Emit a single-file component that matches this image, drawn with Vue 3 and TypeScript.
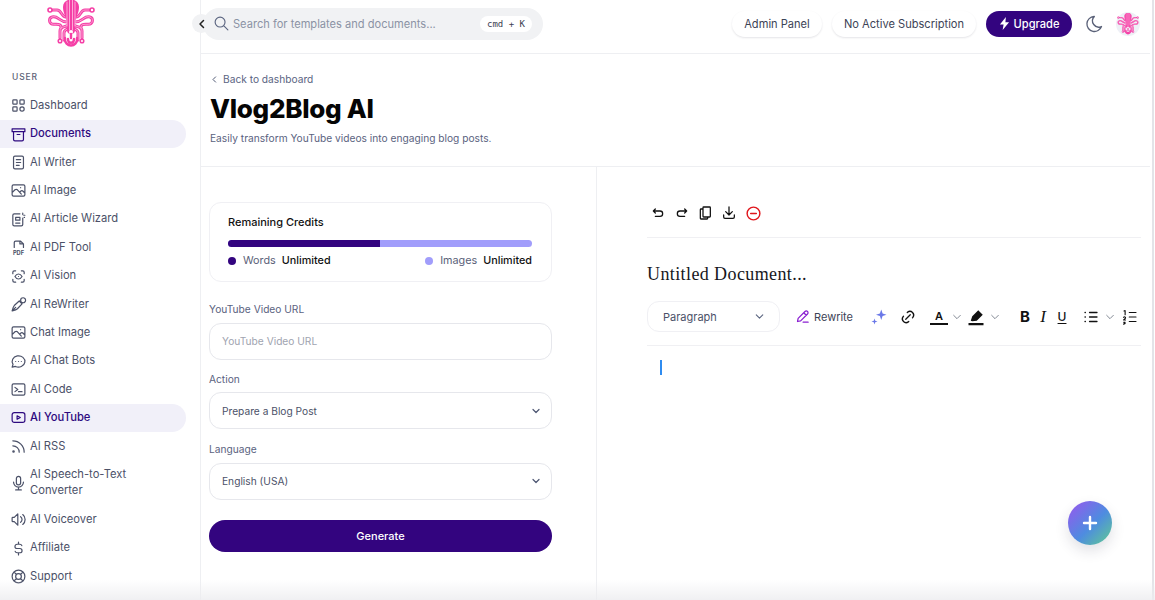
<script setup lang="ts">
interface NavItem {
  label: string
  d: string
  active?: boolean
  tall?: boolean
  pdf?: boolean
}
const photo = 'M5 4h14a2 2 0 0 1 2 2v12a2 2 0 0 1-2 2H5a2 2 0 0 1-2-2V6a2 2 0 0 1 2-2zM3 15l4-4c1.2-1 2.4-1 3.5 0L16 17M14 14l1-1c1.2-1 2.4-1 3.5 0l2.5 2.5M15 8h.01'
const nav: NavItem[] = [
  { label: 'Dashboard', d: 'M5 4h4a1 1 0 0 1 1 1v4a1 1 0 0 1-1 1H5a1 1 0 0 1-1-1V5a1 1 0 0 1 1-1zM15 4h4a1 1 0 0 1 1 1v4a1 1 0 0 1-1 1h-4a1 1 0 0 1-1-1V5a1 1 0 0 1 1-1zM5 14h4a1 1 0 0 1 1 1v4a1 1 0 0 1-1 1H5a1 1 0 0 1-1-1v-4a1 1 0 0 1 1-1zM14 17a3 3 0 1 0 6 0a3 3 0 1 0-6 0' },
  { label: 'Documents', active: true, d: 'M3 4h18v4H3zM5 8v11a2 2 0 0 0 2 2h10a2 2 0 0 0 2-2V8M10 12h4' },
  { label: 'AI Writer', d: 'M7 3h10a2 2 0 0 1 2 2v14a2 2 0 0 1-2 2H7a2 2 0 0 1-2-2V5a2 2 0 0 1 2-2zM9 8h6M9 12h6M9 16h4' },
  { label: 'AI Image', d: photo },
  { label: 'AI Article Wizard', d: 'M14 4H6a2 2 0 0 0-2 2v13a2 2 0 0 0 2 2h10a2 2 0 0 0 2-2V10M8 9h6v4H8zM8 17h6M18 3v2M21 6h-1.5M20 9h.5' },
  { label: 'AI PDF Tool', pdf: true, d: 'M6 12V5a2 2 0 0 1 2-2h7l4 4v5M14 3v4h5' },
  { label: 'AI Vision', d: 'M4 8V6a2 2 0 0 1 2-2h2M4 16v2a2 2 0 0 0 2 2h2M16 4h2a2 2 0 0 1 2 2v2M16 20h2a2 2 0 0 0 2-2v-2M7 12s2-3.5 5-3.5 5 3.5 5 3.5-2 3.5-5 3.5-5-3.5-5-3.5zM12 12h.01' },
  { label: 'AI ReWriter', d: 'M3 21c1-4 1.500-6 3-7.500L13 7l4 4-6.500 7c-1.500 1.500-3.500 2-7.500 3zM3 21l5-5M13 7l4 4M15 6a3.500 3.500 0 1 0 7 0a3.500 3.500 0 1 0-7 0' },
  { label: 'Chat Image', d: photo },
  { label: 'AI Chat Bots', d: 'M3 20l1.300-3.900A9 8 0 1 1 7.700 19L3 20M8 12h.01M12 12h.01M16 12h.01' },
  { label: 'AI Code', d: 'M5 4h14a2 2 0 0 1 2 2v12a2 2 0 0 1-2 2H5a2 2 0 0 1-2-2V6a2 2 0 0 1 2-2zM7 9l4 3-4 3M12 15h5' },
  { label: 'AI YouTube', active: true, d: 'M6 5h12a3 3 0 0 1 3 3v8a3 3 0 0 1-3 3H6a3 3 0 0 1-3-3V8a3 3 0 0 1 3-3zM10 9.500l4.500 2.500-4.500 2.500z' },
  { label: 'AI RSS', d: 'M4 19a1 1 0 1 0 2 0a1 1 0 1 0-2 0M4 4a16 16 0 0 1 16 16M4 11a9 9 0 0 1 9 9' },
  { label: 'AI Speech-to-Text Converter', tall: true, d: 'M12 2a3 3 0 0 1 3 3v6a3 3 0 0 1-6 0V5a3 3 0 0 1 3-3zM5 10a7 7 0 0 0 14 0M8 21h8M12 17v4' },
  { label: 'AI Voiceover', d: 'M15 8a5 5 0 0 1 0 8M18 5a9 9 0 0 1 0 14M6 15H4a1 1 0 0 1-1-1v-4a1 1 0 0 1 1-1h2l5-5v16z' },
  { label: 'Affiliate', d: 'M16.700 8A3 3 0 0 0 14 6h-4a3 3 0 0 0 0 6h4a3 3 0 0 1 0 6h-4a3 3 0 0 1-2.700-2M12 3v3M12 18v3' },
  { label: 'Support', d: 'M8 12a4 4 0 1 0 8 0a4 4 0 1 0-8 0M3 12a9 9 0 1 0 18 0a9 9 0 1 0-18 0M15 15l3.350 3.350M9 15l-3.350 3.350M5.650 5.650L9 9M18.350 5.650L15 9' }
]
const octoLines = 'M19 17c-5 0-4-7-9-7H6M20 22c-8 0-9-7-15-5-3.500 1-3 6 0 7 4 1 9-1 9 3v2M21 25c-4 3-8 1-8 6v7M22 28c-3 2-5 2-5 5v7'
const tools = [
  'M8 12L5 9l3-3M5 9h10a3.500 3.500 0 0 1 0 8H8',
  'M16 12l3-3-3-3M19 9H9a3.500 3.500 0 0 0 0 8h7',
  'M10 3h9a1 1 0 0 1 1 1v13a1 1 0 0 1-1 1h-9a1 1 0 0 1-1-1V4a1 1 0 0 1 1-1zM9 6H6a1 1 0 0 0-1 1v13a1 1 0 0 0 1 1h9a1 1 0 0 0 1-1v-2',
  'M4 15v3a2 2 0 0 0 2 2h12a2 2 0 0 0 2-2v-3M7 10l5 5 5-5M12 3v12'
]
</script>

<template>
  <div class="page">
    <svg class="defs" width="0" height="0" aria-hidden="true">
      <symbol id="octo" viewBox="0 0 48 48">
        <g fill="none" stroke-linecap="round" stroke-linejoin="round">
          <g id="octo-half">
            <path :d="octoLines" stroke="#f53fa6" stroke-width="3" />
            <path :d="octoLines" stroke="#ffc4e4" stroke-width=".7" />
            <circle cx="3" cy="10" r="2" stroke="#f53fa6" stroke-width="1.600" />
            <circle cx="13" cy="41" r="1.800" stroke="#f53fa6" stroke-width="1.500" />
          </g>
          <use href="#octo-half" transform="translate(48 0) scale(-1 1)" />
          <path d="M16 7C16-3 32-3 32 7c0 6-3 10-4 16v7a4 4 0 0 1-8 0v-7c-1-6-4-10-4-16z" fill="#f53fa6" />
          <path d="M20 2v24M22.500 0v30M25.500 0v30M28 2v24" stroke="#ffc4e4" stroke-width=".8" />
          <circle cx="24" cy="32" r="2" fill="#fff" />
          <path d="M24 34v4M18 38c-1 10 13 10 12 0M21 39c0 5 6 5 6 0" stroke="#f53fa6" stroke-width="2.400" />
        </g>
      </symbol>
    </svg>

    <aside class="sidebar">
      <div class="logo-wrap"><svg class="logo"><use href="#octo" /></svg></div>
      <div class="group-label">USER</div>
      <nav class="nav">
        <a v-for="item in nav" :key="item.label" class="nav-item" :class="{ active: item.active, tall: item.tall }">
          <svg class="nav-icon" viewBox="0 0 24 24" fill="none" stroke="currentColor" stroke-width="1.700" stroke-linecap="round" stroke-linejoin="round">
            <path :d="item.d" />
            <text v-if="item.pdf" x="12" y="22" text-anchor="middle" font-size="8" font-weight="700" fill="currentColor" stroke="none" font-family="Inter, sans-serif">PDF</text>
          </svg>
          <span>{{ item.label }}</span>
        </a>
      </nav>
    </aside>

    <main class="main">
      <header class="topbar">
        <button class="collapse">
          <svg width="12" height="12" viewBox="0 0 24 24" fill="none" stroke="#222" stroke-width="3" stroke-linecap="round" stroke-linejoin="round"><path d="M15 5l-7 7 7 7" /></svg>
        </button>
        <div class="search">
          <svg width="17" height="17" viewBox="0 0 24 24" fill="none" stroke="#5b6580" stroke-width="1.600" stroke-linecap="round"><path d="M3 10a7 7 0 1 0 14 0a7 7 0 1 0-14 0M21 21l-6-6" /></svg>
          <span class="search-text">Search for templates and documents...</span>
          <kbd class="kbd">cmd + K</kbd>
        </div>
        <div class="top-actions">
          <span class="pill admin">Admin Panel</span>
          <span class="pill subscription">No Active Subscription</span>
          <span class="upgrade">
            <svg width="11" height="13" viewBox="0 0 12 14" fill="#fff"><path d="M7.500 0L1 8h4l-1 6 7-8.500H7z" /></svg>
            Upgrade
          </span>
          <svg class="moon" width="20" height="20" viewBox="0 0 24 24" fill="none" stroke="#5a6178" stroke-width="1.600" stroke-linejoin="round"><path d="M12 3h.4a7.500 7.500 0 0 0 8.600 12A9 9 0 1 1 12 3z" /></svg>
          <span class="avatar"><svg width="22" height="22"><use href="#octo" /></svg></span>
        </div>
      </header>

      <section class="title-block">
        <a class="back">
          <svg width="9" height="9" viewBox="0 0 24 24" fill="none" stroke="#4d5672" stroke-width="2.600" stroke-linecap="round" stroke-linejoin="round"><path d="M15 5l-7 7 7 7" /></svg>
          Back to dashboard
        </a>
        <h1>Vlog2Blog AI</h1>
        <p>Easily transform YouTube videos into engaging blog posts.</p>
      </section>

      <div class="columns">
        <section class="form-col">
          <div class="credits">
            <div class="credits-title">Remaining Credits</div>
            <div class="bar"><span class="bar-fill" /></div>
            <div class="legend">
              <span class="legend-item"><i class="dot dark" /><span class="legend-name">Words</span><b>Unlimited</b></span>
              <span class="legend-item"><i class="dot light" /><span class="legend-name">Images</span><b>Unlimited</b></span>
            </div>
          </div>

          <label class="label first">YouTube Video URL</label>
          <div class="field first-field placeholder">YouTube Video URL</div>

          <label class="label">Action</label>
          <div class="field select">
            Prepare a Blog Post
            <svg width="12" height="12" viewBox="0 0 24 24" fill="none" stroke="#4d5672" stroke-width="2.400" stroke-linecap="round" stroke-linejoin="round"><path d="M6 9l6 6 6-6" /></svg>
          </div>

          <label class="label">Language</label>
          <div class="field select last-field">
            English (USA)
            <svg width="12" height="12" viewBox="0 0 24 24" fill="none" stroke="#4d5672" stroke-width="2.400" stroke-linecap="round" stroke-linejoin="round"><path d="M6 9l6 6 6-6" /></svg>
          </div>

          <button class="generate">Generate</button>
        </section>

        <section class="editor-col">
          <div class="doc-tools">
            <svg v-for="d in tools" :key="d" width="16" height="16" viewBox="0 0 24 24" fill="none" stroke="#111" stroke-width="1.900" stroke-linecap="round" stroke-linejoin="round"><path :d="d" /></svg>
            <svg width="17" height="17" viewBox="0 0 24 24" fill="none" stroke="#e0151b" stroke-width="2" stroke-linecap="round"><path d="M3 12a9 9 0 1 0 18 0a9 9 0 1 0-18 0M8 12h8" /></svg>
          </div>
          <h2>Untitled Document...</h2>
          <div class="format-bar">
            <div class="para">
              Paragraph
              <svg width="13" height="13" viewBox="0 0 24 24" fill="none" stroke="#5b6580" stroke-width="2" stroke-linecap="round" stroke-linejoin="round"><path d="M6 9l6 6 6-6" /></svg>
            </div>
            <span class="rewrite">
              <svg width="15" height="15" viewBox="0 0 24 24" fill="none" stroke="#8a1fd1" stroke-width="2" stroke-linecap="round" stroke-linejoin="round"><path d="M4 20l1-5L16 4a2.800 2.800 0 0 1 4 4L9 19zM14 6l4 4M13 21h8" /></svg>
              Rewrite
            </span>
            <svg class="tb ml17" viewBox="0 0 24 24" fill="#6a78e8"><path d="M15 2l1.800 5.200L22 9l-5.200 1.800L15 16l-1.800-5.200L8 9l5.200-1.800zM6 14l1 3 3 1-3 1-1 3-1-3-3-1 3-1z" /></svg>
            <svg class="tb ml11" viewBox="0 0 24 24" fill="none" stroke="#111" stroke-width="1.700" stroke-linecap="round"><path d="M9 15l6-6M11 6l.500-.500a5 5 0 0 1 7 7l-.500.500M13 18l-.500.500a5 5 0 0 1-7-7L6 11" /></svg>
            <span class="tb ml13 letter-a">A</span>
            <svg class="chev ml4" viewBox="0 0 24 24" fill="none" stroke="#6b7280" stroke-width="2" stroke-linecap="round" stroke-linejoin="round"><path d="M4 8l8 8 8-8" /></svg>
            <svg class="tb ml5" viewBox="0 0 24 24"><path d="M5 17l2-6L15 3l6 6-8 8-6 .5zM2 20h20v3H2z" fill="#111" /></svg>
            <svg class="chev ml5" viewBox="0 0 24 24" fill="none" stroke="#6b7280" stroke-width="2" stroke-linecap="round" stroke-linejoin="round"><path d="M4 8l8 8 8-8" /></svg>
            <span class="tb ml16 letter-b">B</span>
            <span class="tb letter-i">I</span>
            <span class="tb ml1 letter-u">U</span>
            <svg class="tb ml11" viewBox="0 0 24 24" fill="none" stroke="#111" stroke-width="1.700" stroke-linecap="round"><path d="M10 6h10M10 12h10M10 18h10M4 6h.5M4 12h.5M4 18h.5" /></svg>
            <svg class="chev ml5" viewBox="0 0 24 24" fill="none" stroke="#6b7280" stroke-width="2" stroke-linecap="round" stroke-linejoin="round"><path d="M4 8l8 8 8-8" /></svg>
            <svg class="tb ml6" viewBox="0 0 24 24" fill="none" stroke="#111" stroke-width="1.500" stroke-linecap="round" stroke-linejoin="round"><path d="M11 6h9M11 12h9M11 18h9M4 4l1.500-.5V9M3.500 12.500c1-1.500 3-.5 2.500 1L3.500 16H6M3.500 19h2l-1 1.500h1l-2 1" /></svg>
          </div>
          <div class="body-area"><span class="caret" /></div>
        </section>
      </div>
    </main>

    <div class="scroll-edge" />
    <div class="bottom-fade" />
    <button class="fab">
      <svg width="16" height="16" viewBox="0 0 16 16" stroke="#fff" stroke-width="2.400" stroke-linecap="round"><path d="M8 2v12M2 8h12" /></svg>
    </button>
  </div>
</template>

<style>
html, body { margin: 0; background: #fff; overflow: hidden; }
</style>

<style scoped>
* { box-sizing: border-box; }
.page {
  position: relative;
  display: flex;
  width: 1155px;
  height: 600px;
  overflow: hidden;
  background: #fff;
  font-family: Inter, "Liberation Sans", sans-serif;
  color: #4b5168;
}
.defs { position: absolute; }
.sidebar { flex: 0 0 201px; height: 600px; border-right: 1px solid #eeeff2; }
.logo-wrap { height: 48px; padding-left: 47px; }
.logo { display: block; width: 48px; height: 48px; }
.group-label {
  margin: 24px 0 0 12px;
  height: 19.500px;
  font-size: 8.500px;
  line-height: 10px;
  font-weight: 500;
  letter-spacing: .9px;
  color: #5c6276;
}
.nav { display: flex; flex-direction: column; width: 186px; }
.nav-item {
  display: flex;
  align-items: center;
  gap: 3.500px;
  height: 28.400px;
  padding-left: 9.500px;
  font-size: 11.200px;
  line-height: 15.600px;
  color: #4b5168;
  border-radius: 0 14px 14px 0;
}
.nav-item.tall { height: 45px; width: 150px; }
.nav-item.active { background: #f1f0f9; color: #2e0a80; font-weight: 500; }
.nav-icon { flex: 0 0 auto; width: 17px; height: 17px; }
.main { flex: 1 1 auto; min-width: 0; display: flex; flex-direction: column; }
.topbar {
  position: relative;
  display: flex;
  align-items: center;
  justify-content: space-between;
  width: 949px;
  height: 54px;
  padding: 0 10px 6px 2px;
  border-bottom: 1px solid #eeeff2;
}
.collapse {
  position: absolute;
  left: -9px;
  top: 14px;
  display: flex;
  align-items: center;
  justify-content: center;
  width: 19px;
  height: 19px;
  padding: 0;
  border: 0;
  border-radius: 50%;
  background: #f1f2f4;
}
.search {
  display: flex;
  align-items: center;
  width: 340px;
  height: 32px;
  padding: 0 11px 0 10px;
  border-radius: 16px;
  background: #f1f2f4;
}
.search-text { margin-left: 3px; font-size: 11.100px; color: #8b92a4; white-space: nowrap; }
.kbd {
  margin-left: auto;
  display: flex;
  align-items: center;
  justify-content: center;
  width: 52px;
  height: 16px;
  border-radius: 8px;
  background: #fff;
  font-family: "DejaVu Sans Mono", monospace;
  font-size: 9px;
  color: #3c4152;
}
.top-actions { display: flex; align-items: center; }
.pill {
  display: flex;
  align-items: center;
  justify-content: center;
  height: 26px;
  border-radius: 13px;
  background: #fff;
  box-shadow: 0 1px 2px rgba(30, 35, 60, .12);
  font-size: 11.100px;
  color: #3d4356;
  white-space: nowrap;
}
.admin { width: 90px; }
.subscription { width: 144px; margin-left: 10px; }
.upgrade {
  display: flex;
  align-items: center;
  justify-content: center;
  gap: 4px;
  width: 86px;
  height: 26px;
  margin-left: 10px;
  border-radius: 13px;
  background: #33047f;
  color: #fff;
  font-size: 11.100px;
  font-weight: 500;
}
.moon { margin-left: 12px; }
.avatar {
  display: flex;
  align-items: center;
  justify-content: center;
  width: 24px;
  height: 24px;
  margin-left: 12px;
  border-radius: 50%;
  background: #eef0f6;
}
.title-block { height: 113px; padding: 18px 0 0 9px; width: 949px; border-bottom: 1px solid #eeeff2; }
.back { display: flex; align-items: center; gap: 4px; height: 14px; font-size: 10.200px; color: #5a6482; }
h1 {
  margin: 6px 0 0;
  font-family: Inter, sans-serif;
  font-size: 26px;
  line-height: 34px;
  font-weight: 800;
  letter-spacing: -.3px;
  color: #050505;
}
.title-block p { margin: 5px 0 0; font-size: 10.200px; line-height: 14px; color: #5a6280; }
.columns { display: flex; flex: 1 1 auto; width: 949px; }
.form-col { flex: 0 0 396px; padding: 35px 44px 0 8px; border-right: 1px solid #eeeff2; }
.credits {
  height: 80px;
  padding: 12px 19px 0 18px;
  border: 1px solid #f0f0f4;
  border-radius: 12px;
}
.credits-title { font-size: 11px; line-height: 14px; font-weight: 500; color: #111; }
.bar { height: 7px; margin-top: 11px; border-radius: 4px; background: #a19dfb; overflow: hidden; }
.bar-fill { display: block; width: 50%; height: 100%; background: #33047f; }
.legend { display: flex; justify-content: space-between; margin-top: 7px; }
.legend-item { display: flex; align-items: center; font-size: 10.800px; line-height: 14px; color: #5a6178; }
.legend-item b { margin-left: 6px; font-weight: 500; color: #111; }
.legend-name { margin-left: 7px; }
.dot { width: 8px; height: 8px; border-radius: 50%; }
.dot.dark { background: #33047f; }
.dot.light { background: #a19dfb; }
.label { display: block; margin-top: 12.500px; height: 14px; font-size: 10.200px; line-height: 14px; color: #5a6280; }
.label.first { margin-top: 20px; }
.field {
  display: flex;
  align-items: center;
  justify-content: space-between;
  height: 37px;
  margin-top: 6px;
  padding: 0 9px 0 12px;
  border: 1px solid #e6e7ec;
  border-radius: 12px;
  font-size: 10.200px;
  color: #4b5168;
}
.field.first-field { margin-top: 7px; height: 36.500px; }
.field.last-field { margin-top: 7px; }
.field.placeholder { color: #a0a4b0; }
.generate {
  display: block;
  width: 100%;
  height: 32px;
  margin-top: 20px;
  border: 0;
  border-radius: 16px;
  background: #33047f;
  color: #fff;
  font-family: inherit;
  font-size: 11px;
  font-weight: 500;
}
.editor-col { flex: 1 1 auto; min-width: 0; padding: 35px 9px 0 50px; }
.doc-tools {
  display: flex;
  align-items: center;
  gap: 7.700px;
  height: 36px;
  padding: 0 0 13px 3px;
  border-bottom: 1px solid #f0f0f3;
}
h2 {
  margin: 23px 0 0;
  font-family: "Liberation Serif", serif;
  font-size: 18px;
  line-height: 26px;
  font-weight: 400;
  letter-spacing: .4px;
  color: #17171c;
}
.format-bar {
  display: flex;
  align-items: center;
  height: 45px;
  margin-top: 14px;
  padding-bottom: 13px;
  border-bottom: 1px solid #f0f0f3;
}
.para {
  display: flex;
  align-items: center;
  justify-content: space-between;
  flex: 0 0 133px;
  height: 31px;
  padding: 0 13px 0 15px;
  border: 1px solid #f0f0f4;
  border-radius: 12px;
  font-size: 11px;
  color: #4b5168;
}
.rewrite {
  display: flex;
  align-items: center;
  gap: 4px;
  flex: 0 0 58px;
  margin-left: 15px;
  font-size: 11px;
  color: #3d4356;
  white-space: nowrap;
}
.tb {
  display: flex;
  align-items: center;
  justify-content: center;
  flex: 0 0 18px;
  width: 18px;
  height: 18px;
  color: #111;
}
.chev { flex: 0 0 10px; width: 10px; height: 10px; }
.ml1 { margin-left: 1px; }
.ml4 { margin-left: 4px; }
.ml5 { margin-left: 5px; }
.ml6 { margin-left: 6px; }
.ml11 { margin-left: 11px; }
.ml13 { margin-left: 13px; }
.ml16 { margin-left: 16px; }
.ml17 { margin-left: 17px; }
.letter-a { font-size: 11px; font-weight: 600; border-bottom: 2px solid #111; height: 16px; }
.letter-b { font-size: 15px; font-weight: 700; }
.letter-i { font-family: "Liberation Serif", serif; font-style: italic; font-size: 17px; }
.letter-u { font-size: 12px; font-weight: 500; text-decoration: underline; text-underline-offset: 2px; }
.body-area { padding: 14px 0 0 13px; }
.caret { display: block; width: 2px; height: 15px; background: #2f8cf0; }
.scroll-edge {
  position: absolute;
  right: 1px;
  top: 0;
  width: 2px;
  height: 600px;
  background: #e3e4e8;
}
.bottom-fade {
  position: absolute;
  left: 0;
  right: 0;
  bottom: 0;
  height: 20px;
  background: linear-gradient(to bottom, rgba(240, 240, 242, 0), rgba(236, 236, 239, .8));
  pointer-events: none;
}
.fab {
  position: absolute;
  left: 1068px;
  top: 501px;
  display: flex;
  align-items: center;
  justify-content: center;
  width: 44px;
  height: 44px;
  padding: 0;
  border: 0;
  border-radius: 50%;
  background: linear-gradient(135deg, #8d5fec 10%, #4e8ce0 55%, #5ec698 95%);
  box-shadow: 0 6px 14px rgba(40, 40, 70, .14);
}
</style>
